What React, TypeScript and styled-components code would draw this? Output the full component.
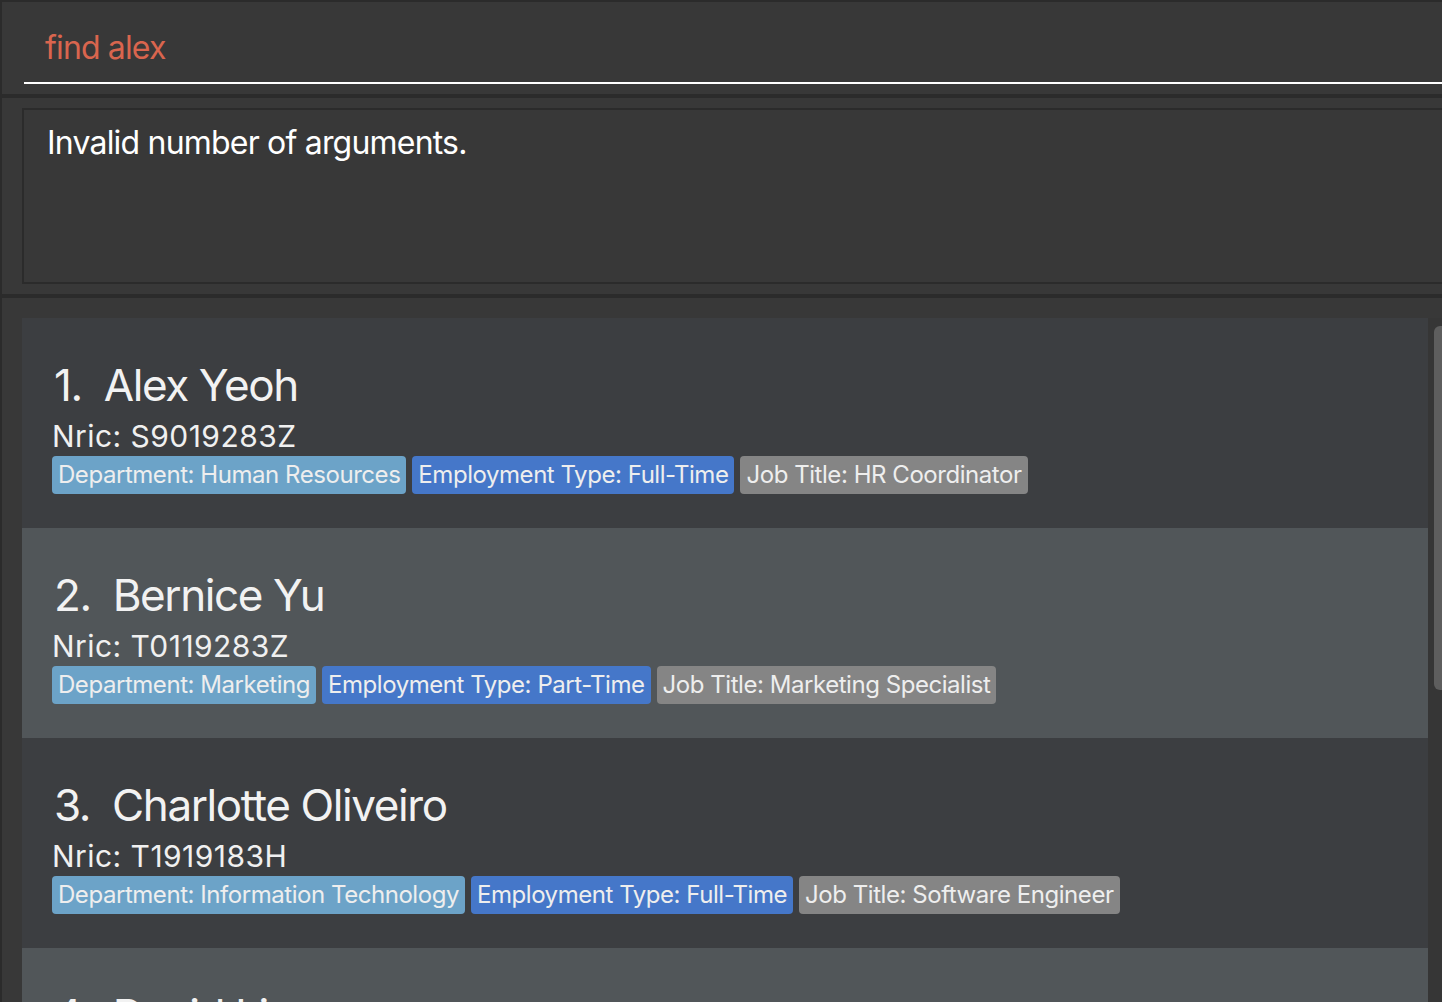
import React from "react";
import styled, { createGlobalStyle } from "styled-components";

const GlobalStyle = createGlobalStyle`
  html, body { margin: 0; padding: 0; background: #383838; }
  body { font-family: Inter, "Noto Sans", sans-serif; }
  * { box-sizing: border-box; }
`;

const Window = styled.div`
  width: 1442px;
  height: 1002px;
  overflow: hidden;
  background: #383838;
  border-top: 2px solid #2b2b2b;
  border-left: 2px solid #2b2b2b;
  display: flex;
  flex-direction: column;
`;

const CommandSection = styled.div`
  height: 92px;
  flex: none;
  display: flex;
  align-items: flex-end;
  padding: 0 0 10px 22px;
`;

const CommandField = styled.div`
  flex: 1;
  margin-right: -20px;
  border-bottom: 2px solid #ffffff;
  padding: 0 0 14px 21px;
  font-size: 32px;
  line-height: 40px;
  color: #d9654e;
  letter-spacing: -0.85px;
`;

const Separator = styled.div`
  height: 4px;
  flex: none;
  background: #2b2b2b;
  margin-right: -20px;
`;

const ResultSection = styled.div`
  height: 196px;
  flex: none;
  padding: 10px 0 10px 20px;
  display: flex;
`;

const ResultBox = styled.div`
  flex: 1;
  margin-right: -20px;
  border: 2px solid #2b2b2b;
  padding: 13px 0 0 23px;
  font-size: 32px;
  line-height: 40px;
  color: #ffffff;
  letter-spacing: -0.8px;
`;

const ListSection = styled.div`
  flex: 1;
  display: flex;
  padding: 20px 0 0 20px;
  min-height: 0;
`;

const CardList = styled.div`
  width: 1406px;
  flex: none;
  display: flex;
  flex-direction: column;
`;

const ScrollTrack = styled.div`
  flex: 1;
  min-width: 0;
  overflow: hidden;
  background: #363636;
  padding: 8px 0 0 6px;
`;

const ScrollThumb = styled.div`
  height: 364px;
  width: 16px;
  background: #5e5e5e;
  border-radius: 6px 0 0 6px;
`;

const Card = styled.div<{ $alt: boolean }>`
  height: 210px;
  flex: none;
  background: ${(p) => (p.$alt ? "#515659" : "#3c3e41")};
  padding: 41px 0 0 30px;
  display: flex;
  flex-direction: column;
  align-items: flex-start;
`;

const NameRow = styled.div`
  display: flex;
  font-size: 44px;
  line-height: 52px;
  color: #f2f2f2;
  padding-left: 2px;
  letter-spacing: -1.4px;
`;

const Index = styled.span`
  margin-right: 22px;
`;

const Nric = styled.div`
  margin-top: 7px;
  font-size: 30px;
  line-height: 36px;
  color: #f0f0f0;
  letter-spacing: 0.45px;
`;

const TagRow = styled.div`
  margin-top: 2px;
  display: flex;
  gap: 6px;
`;

const Tag = styled.span<{ $kind: "dept" | "type" | "job" }>`
  height: 38px;
  line-height: 38px;
  padding: 0 6px;
  border-radius: 4px;
  font-size: 24px;
  color: #eeeeee;
  letter-spacing: -0.45px;
  white-space: nowrap;
  background: ${(p) =>
    p.$kind === "dept" ? "#6ca3c8" : p.$kind === "type" ? "#4577c9" : "#858585"};
`;

const people = [
  { name: "Alex Yeoh", nric: "S9019283Z", dept: "Human Resources", type: "Full-Time", job: "HR Coordinator" },
  { name: "Bernice Yu", nric: "T0119283Z", dept: "Marketing", type: "Part-Time", job: "Marketing Specialist" },
  { name: "Charlotte Oliveiro", nric: "T1919183H", dept: "Information Technology", type: "Full-Time", job: "Software Engineer" },
  { name: "David Li", nric: "S8219283A", dept: "Finance", type: "Full-Time", job: "Accountant" },
];

export default function App() {
  return (
    <>
      <GlobalStyle />
      <Window>
        <CommandSection>
          <CommandField>find alex</CommandField>
        </CommandSection>
        <Separator />
        <ResultSection>
          <ResultBox>Invalid number of arguments.</ResultBox>
        </ResultSection>
        <Separator />
        <ListSection>
          <CardList>
            {people.map((p, i) => (
              <Card key={p.nric} $alt={i % 2 === 1}>
                <NameRow>
                  <Index>{i + 1}.</Index>
                  <span>{p.name}</span>
                </NameRow>
                <Nric>Nric: {p.nric}</Nric>
                <TagRow>
                  <Tag $kind="dept">Department: {p.dept}</Tag>
                  <Tag $kind="type">Employment Type: {p.type}</Tag>
                  <Tag $kind="job">Job Title: {p.job}</Tag>
                </TagRow>
              </Card>
            ))}
          </CardList>
          <ScrollTrack>
            <ScrollThumb />
          </ScrollTrack>
        </ListSection>
      </Window>
    </>
  );
}
